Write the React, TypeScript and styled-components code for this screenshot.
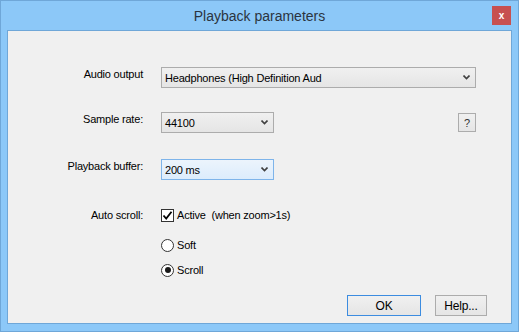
import React from 'react';
import styled, { createGlobalStyle } from 'styled-components';

const GlobalStyle = createGlobalStyle`
  html, body { margin: 0; padding: 0; background: #8cc8f8; }
  * { box-sizing: border-box; }
`;

const Window = styled.div`
  width: 519px;
  height: 332px;
  border: 1px solid #6fa7d8;
  background: #8cc8f8;
  padding: 0 6px 7px 6px;
  display: flex;
  flex-direction: column;
  font-family: "Liberation Sans", Arial, sans-serif;
`;

const TitleBar = styled.div`
  height: 29px;
  display: grid;
  grid-template-columns: 1fr auto 1fr;
  align-items: start;
`;

const Title = styled.div`
  grid-column: 2;
  font-size: 14px;
  color: #2b3440;
  line-height: 14px;
  padding-top: 8px;
`;

const CloseButton = styled.div`
  grid-column: 3;
  justify-self: end;
  margin-top: 5px;
  margin-right: 1px;
  width: 19px;
  height: 19px;
  background: #c75050;
  color: #fff;
  font-size: 10px;
  font-weight: bold;
  display: flex;
  align-items: center;
  justify-content: center;
  line-height: 1;
`;

const Client = styled.div`
  flex: 1;
  border: 1px solid #6fa7d8;
  background: #f0f0f0;
  display: flex;
  flex-direction: column;
  padding: 36px 0 7px 0;
  font-size: 11px;
  letter-spacing: -0.2px;
  color: #000;
`;

const Row = styled.div<{ $top: number; $h?: number }>`
  display: grid;
  grid-template-columns: 135px 315px;
  column-gap: 18px;
  margin-top: ${p => p.$top}px;
  height: ${p => p.$h ?? 21}px;
  align-items: center;
`;

const Label = styled.div<{ $lift?: number }>`
  text-align: right;
  align-self: ${p => (p.$lift ? 'start' : 'center')};
  padding-top: ${p => p.$lift ?? 0}px;
`;

const Controls = styled.div`
  display: flex;
  align-items: center;
  justify-content: space-between;
`;

const Combo = styled.div<{ $width: number; $focus?: boolean }>`
  width: ${p => p.$width}px;
  height: 21px;
  border: 1px solid ${p => (p.$focus ? '#7eb4ea' : '#acacac')};
  background: ${p =>
    p.$focus
      ? 'linear-gradient(#ecf4fc, #dcecfc)'
      : 'linear-gradient(#f0f0f0, #e5e5e5)'};
  display: flex;
  align-items: center;
  justify-content: space-between;
  padding: 0 5px 0 3px;
  white-space: nowrap;
`;

const Chevron = () => (
  <svg width="7" height="5" viewBox="0 0 7 5">
    <path d="M0.5 0.5 L3.5 3.5 L6.5 0.5" fill="none" stroke="#404040" strokeWidth="1.6" />
  </svg>
);

const SmallButton = styled.div`
  width: 18px;
  height: 19px;
  border: 1px solid #acacac;
  background: linear-gradient(#f0f0f0, #e5e5e5);
  display: flex;
  align-items: center;
  justify-content: center;
  color: #333;
`;

const Option = styled.div`
  display: flex;
  align-items: center;
  gap: 3px;
  white-space: pre;
`;

const CheckBox = styled.div`
  width: 13px;
  height: 13px;
  border: 1px solid #333;
  background: #fff;
  display: flex;
  align-items: center;
  justify-content: center;
`;

const Radio = styled.div<{ $on?: boolean }>`
  width: 13px;
  height: 13px;
  border-radius: 50%;
  border: 1px solid #333;
  background: #fff;
  display: flex;
  align-items: center;
  justify-content: center;
  &::after {
    content: '';
    width: 6px;
    height: 6px;
    border-radius: 50%;
    background: ${p => (p.$on ? '#1a1a1a' : 'transparent')};
  }
`;

const ButtonBar = styled.div`
  margin-top: auto;
  display: flex;
  justify-content: flex-end;
  gap: 14px;
  padding-right: 24px;
`;

const Button = styled.div<{ $width: number; $default?: boolean }>`
  width: ${p => p.$width}px;
  height: 21px;
  border: 1px solid ${p => (p.$default ? '#3c8ce0' : '#acacac')};
  background: linear-gradient(#f0f0f0, #e5e5e5);
  display: flex;
  align-items: center;
  justify-content: center;
  font-size: 12px;
`;

export default function App() {
  return (
    <>
      <GlobalStyle />
      <Window>
        <TitleBar>
          <Title>Playback parameters</Title>
          <CloseButton>x</CloseButton>
        </TitleBar>
        <Client>
          <Row $top={0}>
            <Label $lift={1}>Audio output</Label>
            <Combo $width={315}>
              <span>Headphones (High Definition Aud</span>
              <Chevron />
            </Combo>
          </Row>
          <Row $top={24}>
            <Label $lift={1}>Sample rate:</Label>
            <Controls>
              <Combo $width={113}>
                <span>44100</span>
                <Chevron />
              </Combo>
              <SmallButton>?</SmallButton>
            </Controls>
          </Row>
          <Row $top={26}>
            <Label $lift={0.5}>Playback buffer:</Label>
            <Combo $width={113} $focus>
              <span>200 ms</span>
              <Chevron />
            </Combo>
          </Row>
          <Row $top={25} $h={20}>
            <Label>Auto scroll:</Label>
            <Option>
              <CheckBox>
                <svg width="11" height="11" viewBox="0 0 11 11">
                  <path d="M1.5 5.5 L4.2 8.5 L9.5 1.8" fill="none" stroke="#000" strokeWidth="1.8" />
                </svg>
              </CheckBox>
              <span>Active  (when zoom&gt;1s)</span>
            </Option>
          </Row>
          <Row $top={10} $h={20}>
            <span />
            <Option>
              <Radio />
              <span>Soft</span>
            </Option>
          </Row>
          <Row $top={5} $h={20}>
            <span />
            <Option>
              <Radio $on />
              <span>Scroll</span>
            </Option>
          </Row>
          <ButtonBar>
            <Button $width={74} $default>OK</Button>
            <Button $width={52}>Help...</Button>
          </ButtonBar>
        </Client>
      </Window>
    </>
  );
}
